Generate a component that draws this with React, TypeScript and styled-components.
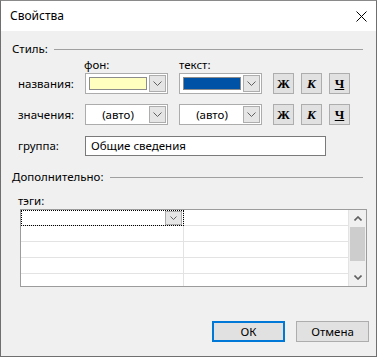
import React from "react";
import styled, { createGlobalStyle } from "styled-components";

const Global = createGlobalStyle`
  html, body { margin: 0; padding: 0; background: #fff; }
  * { box-sizing: border-box; }
  body { font-family: "Noto Sans", "Liberation Sans", sans-serif; font-size: 11.5px; color: #000; }
`;

const Window = styled.div`
  width: 377px;
  height: 357px;
  border: 1px solid #6f6f6f;
  border-top-color: #8a8a8a;
  background: #f0f0f0;
  display: flex;
  flex-direction: column;
`;

const TitleBar = styled.div`
  height: 30px;
  background: #fff;
  display: flex;
  align-items: center;
  justify-content: space-between;
  padding: 0 9px 0 9px;
  flex-shrink: 0;
`;

const Title = styled.span`
  font-size: 12px;
  line-height: 14px;
`;

const CloseBtn = styled.div`
  width: 12px;
  height: 12px;
  display: flex;
  align-items: center;
  justify-content: center;
`;

const SectionHeader = styled.div<{ $mt: number }>`
  margin-top: ${(p) => p.$mt}px;
  height: 14px;
  display: flex;
  align-items: center;
  padding: 0 13px 0 11px;
`;

const HeaderText = styled.span`
  line-height: 14px;
  white-space: nowrap;
`;

const Rule = styled.div`
  flex: 1;
  height: 1px;
  background: #a0a0a0;
  margin-left: 6px;
  margin-top: 1px;
`;

const Row = styled.div<{ $mt: number; $h: number }>`
  margin-top: ${(p) => p.$mt}px;
  height: ${(p) => p.$h}px;
  display: flex;
  align-items: center;
  padding-left: 17px;
`;

const Label = styled.span<{ $w: number }>`
  width: ${(p) => p.$w}px;
  flex-shrink: 0;
  line-height: 14px;
  white-space: nowrap;
`;

const ColLabel = styled.span<{ $w: number }>`
  width: ${(p) => p.$w}px;
  flex-shrink: 0;
  line-height: 14px;
`;

const Combo = styled.div`
  width: 83px;
  height: 21px;
  background: #fff;
  border: 1px solid #acacac;
  display: flex;
  align-items: center;
  padding: 1px 1px 1px 3px;
  margin-right: 11px;
  flex-shrink: 0;
`;

const Swatch = styled.div<{ $color: string }>`
  flex: 1;
  height: 13px;
  background: ${(p) => p.$color};
  border: 1px solid #8c8c8c;
  margin-right: 2px;
`;

const ComboText = styled.div`
  flex: 1;
  text-align: center;
  line-height: 14px;
  margin-right: 2px;
`;

const DropBtn = styled.div<{ $w?: number; $h?: number }>`
  width: ${(p) => p.$w ?? 17}px;
  height: ${(p) => p.$h ?? 17}px;
  background: #e5e5e5;
  border: 1px solid #adadad;
  display: flex;
  align-items: center;
  justify-content: center;
  flex-shrink: 0;
`;

const FmtGroup = styled.div`
  display: flex;
  gap: 7px;
`;

const FmtBtn = styled.div<{ $italic?: boolean; $underline?: boolean }>`
  width: 21px;
  height: 21px;
  background: #e1e1e1;
  border: 1px solid #adadad;
  display: flex;
  align-items: center;
  justify-content: center;
  font-family: "Liberation Serif", "DejaVu Serif", serif;
  font-weight: bold;
  font-size: 13px;
  font-style: ${(p) => (p.$italic ? "italic" : "normal")};
  text-decoration: ${(p) => (p.$underline ? "underline" : "none")};
  line-height: 1;
`;

const TextInput = styled.div`
  width: 241px;
  height: 20px;
  background: #fff;
  border: 1px solid #7a7a7a;
  display: flex;
  align-items: center;
  padding-left: 5px;
  line-height: 14px;
`;

const GridBox = styled.div`
  margin: 1px 0 0 19px;
  width: 347px;
  height: 78px;
  border: 1px solid #9c9c9c;
  background: #fff;
  display: flex;
`;

const Cells = styled.div`
  flex: 1;
  display: grid;
  grid-template-columns: 163px 1fr;
  grid-auto-rows: 16px;
  overflow: hidden;
`;

const Cell = styled.div<{ $focus?: boolean }>`
  border-bottom: 1px solid #e3e3e3;
  border-right: 1px solid #e3e3e3;
  display: flex;
  justify-content: flex-end;
  align-items: center;
  ${(p) =>
    p.$focus
      ? `outline: 1px dotted #000; outline-offset: -1px; padding-right: 1px;`
      : ""}
`;

const ScrollBar = styled.div`
  width: 17px;
  background: #f0f0f0;
  display: flex;
  flex-direction: column;
  align-items: stretch;
`;

const ScrollArrow = styled.div`
  height: 17px;
  display: flex;
  align-items: center;
  justify-content: center;
`;

const Thumb = styled.div`
  height: 34px;
  margin: 0 1px;
  background: #cdcdcd;
`;

const ScrollSpace = styled.div`
  flex: 1;
`;

const Footer = styled.div`
  margin-top: 34px;
  display: flex;
  justify-content: flex-end;
  gap: 11px;
  padding-right: 7px;
`;

const Button = styled.div<{ $default?: boolean }>`
  width: 73px;
  height: 21px;
  background: #e1e1e1;
  border: ${(p) => (p.$default ? "2px solid #0078d7" : "1px solid #adadad")};
  display: flex;
  align-items: center;
  justify-content: center;
  line-height: 14px;
`;

const Chevron = () => (
  <svg width="9" height="5" viewBox="0 0 9 5">
    <polyline points="0.5,0.5 4.5,4.5 8.5,0.5" fill="none" stroke="#606060" strokeWidth="1" />
  </svg>
);

const SmallChevron = () => (
  <svg width="7" height="4" viewBox="0 0 7 4">
    <polyline points="0.5,0.5 3.5,3.5 6.5,0.5" fill="none" stroke="#606060" strokeWidth="1" />
  </svg>
);

const ScrollChevron = ({ up }: { up?: boolean }) => (
  <svg width="8" height="5" viewBox="0 0 8 5">
    <polyline
      points={up ? "0.5,4.5 4,1 7.5,4.5" : "0.5,0.5 4,4 7.5,0.5"}
      fill="none"
      stroke="#606060"
      strokeWidth="1.6"
    />
  </svg>
);

const FormatButtons = () => (
  <FmtGroup>
    <FmtBtn>Ж</FmtBtn>
    <FmtBtn $italic>К</FmtBtn>
    <FmtBtn $underline>Ч</FmtBtn>
  </FmtGroup>
);

export default function App() {
  const rows = [0, 1, 2, 3, 4];
  return (
    <>
      <Global />
      <Window>
        <TitleBar>
          <Title>Свойства</Title>
          <CloseBtn>
            <svg width="11" height="11" viewBox="0 0 11 11">
              <path d="M0.5 0.5 L10.5 10.5 M10.5 0.5 L0.5 10.5" stroke="#000" strokeWidth="1" />
            </svg>
          </CloseBtn>
        </TitleBar>

        <SectionHeader $mt={11}>
          <HeaderText>Стиль:</HeaderText>
          <Rule />
        </SectionHeader>

        <Row $mt={2} $h={14}>
          <Label $w={66} />
          <ColLabel $w={95}>фон:</ColLabel>
          <ColLabel $w={83}>текст:</ColLabel>
        </Row>

        <Row $mt={1} $h={21}>
          <Label $w={67}>названия:</Label>
          <Combo>
            <Swatch $color="#ffffc0" />
            <DropBtn>
              <Chevron />
            </DropBtn>
          </Combo>
          <Combo>
            <Swatch $color="#0052a6" />
            <DropBtn>
              <Chevron />
            </DropBtn>
          </Combo>
          <FormatButtons />
        </Row>

        <Row $mt={10} $h={21}>
          <Label $w={67}>значения:</Label>
          <Combo>
            <ComboText>(авто)</ComboText>
            <DropBtn>
              <Chevron />
            </DropBtn>
          </Combo>
          <Combo>
            <ComboText>(авто)</ComboText>
            <DropBtn>
              <Chevron />
            </DropBtn>
          </Combo>
          <FormatButtons />
        </Row>

        <Row $mt={11} $h={20}>
          <Label $w={67}>группа:</Label>
          <TextInput>Общие сведения</TextInput>
        </Row>

        <SectionHeader $mt={14}>
          <HeaderText>Дополнительно:</HeaderText>
          <Rule />
        </SectionHeader>

        <Row $mt={10} $h={14}>
          <Label $w={60}>тэги:</Label>
        </Row>

        <GridBox>
          <Cells>
            {rows.map((r) => (
              <React.Fragment key={r}>
                <Cell $focus={r === 0}>
                  {r === 0 && (
                    <DropBtn $w={17} $h={14}>
                      <SmallChevron />
                    </DropBtn>
                  )}
                </Cell>
                <Cell />
              </React.Fragment>
            ))}
          </Cells>
          <ScrollBar>
            <ScrollArrow>
              <ScrollChevron up />
            </ScrollArrow>
            <Thumb />
            <ScrollSpace />
            <ScrollArrow>
              <ScrollChevron />
            </ScrollArrow>
          </ScrollBar>
        </GridBox>

        <Footer>
          <Button $default>ОК</Button>
          <Button>Отмена</Button>
        </Footer>
      </Window>
    </>
  );
}
